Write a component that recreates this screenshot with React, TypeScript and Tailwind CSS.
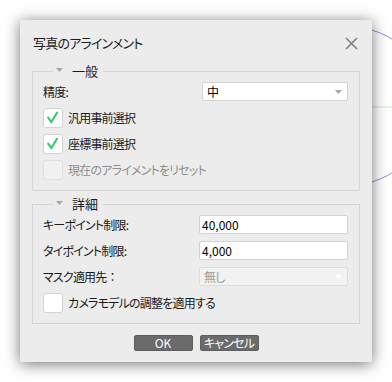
import React from 'react';

const jp = "font-['Noto_Sans_CJK_JP','Noto_Sans',sans-serif] [font-feature-settings:'palt'] tracking-[-0.8px]";

const Caret = ({ color }: { color: string }) => (
  <svg width="7" height="4" viewBox="0 0 7 4">
    <polygon points="0,0 7,0 3.5,4" fill={color} />
  </svg>
);

const Legend = ({ text }: { text: string }) => (
  <legend className="ml-[10px] pl-[3px] pr-[5px]">
    <span className="flex items-center h-4 gap-[9px]">
      <span className="mb-[3px]">
        <Caret color="#a6a6a6" />
      </span>
      <span className="text-[13px] leading-4 tracking-normal text-[#1a1a1a]">{text}</span>
    </span>
  </legend>
);

const Check = ({ checked, disabled, label }: { checked?: boolean; disabled?: boolean; label: string }) => (
  <div className="flex items-center h-5 gap-[5px]">
    <div
      className={`w-5 h-5 rounded-[3px] border ${
        disabled ? 'bg-[#f1f1f1] border-[#dedede]' : 'bg-white border-[#d2d2d2]'
      }`}
    >
      {checked && (
        <svg width="18" height="18" viewBox="0 0 18 18">
          <path d="M4.2 8.6 L7.4 13 L13 3.8" stroke="#3acb6a" strokeWidth="2.2" fill="none" strokeLinecap="round" strokeLinejoin="round" />
        </svg>
      )}
    </div>
    <span className={`text-[12px] leading-4 ${disabled ? 'text-[#8e8e8e]' : 'text-[#1a1a1a]'}`}>{label}</span>
  </div>
);

const Field = ({ label, children }: { label: React.ReactNode; children: React.ReactNode }) => (
  <div className="flex items-center justify-between">
    <span className="text-[12px] leading-4 text-[#1a1a1a]">{label}</span>
    {children}
  </div>
);

const TextBox = ({ value }: { value: string }) => (
  <div className="w-[149px] h-[19px] bg-white border border-[#d3d3d3] rounded-[2px] pl-[2px] flex items-center text-[12px] tracking-normal text-black">
    {value}
  </div>
);

const Select = ({ value, width, disabled }: { value: string; width: string; disabled?: boolean }) => (
  <div
    className={`${width} h-[19px] border rounded-[2px] pl-[4px] pr-[5px] flex items-center justify-between text-[12px] ${
      disabled ? 'bg-[#f2f2f2] border-[#dcdcdc] text-[#9a9a9a]' : 'bg-white border-[#d3d3d3] text-black'
    }`}
  >
    <span>{value}</span>
    <Caret color={disabled ? '#ffffff' : '#a8a8a8'} />
  </div>
);

export default function App() {
  return (
    <div className={`relative w-[392px] h-[382px] bg-white overflow-hidden ${jp}`}>
      {/* viewport content peeking out behind the dialog */}
      <svg className="absolute left-0 top-0" width="392" height="382">
        <line x1="300" y1="107" x2="392" y2="107" stroke="#c4eac4" strokeWidth="1" />
        <circle cx="350" cy="106" r="79" fill="none" stroke="#8c8ce0" strokeWidth="1" />
      </svg>

      <div className="relative ml-[20px] mt-[20px] w-[352px] h-[342px] bg-[#ececec] shadow-[0_2px_14px_rgba(0,0,0,0.55)] px-[12px] flex flex-col">
        <div className="flex items-center justify-between pt-[15px] pl-[1px] pr-[2px] mb-[12px]">
          <span className="text-[13px] leading-4 text-[#1a1a1a]">写真のアラインメント</span>
          <svg width="13" height="13" viewBox="0 0 13 13">
            <path d="M1 1 L12 12 M12 1 L1 12" stroke="#808080" strokeWidth="1.6" />
          </svg>
        </div>

        <fieldset className="border border-[#d6d6d6] pl-[10px] pr-[11px] pt-[3px] pb-[10px] flex flex-col">
          <Legend text="一般" />
          <Field label="精度:">
            <Select value="中" width="w-[146px]" />
          </Field>
          <div className="flex flex-col gap-[6px] mt-[7px]">
            <Check checked label="汎用事前選択" />
            <Check checked label="座標事前選択" />
            <Check disabled label="現在のアライメントをリセット" />
          </div>
        </fieldset>

        <fieldset className="mt-[5px] border border-[#d6d6d6] pl-[10px] pr-[11px] pt-[3px] pb-[10px] flex flex-col gap-[7px]">
          <Legend text="詳細" />
          <Field label="キーポイント制限:">
            <TextBox value="40,000" />
          </Field>
          <Field label="タイポイント制限:">
            <TextBox value="4,000" />
          </Field>
          <Field
            label={
              <>
                マスク適用先<span className="[font-feature-settings:normal]">：</span>
              </>
            }
          >
            <Select value="無し" width="w-[149px]" disabled />
          </Field>
          <Check label="カメラモデルの調整を適用する" />
        </fieldset>

        <div className="flex justify-center gap-[7px] mt-[11px]">
          <button className="w-[59px] h-[16px] bg-[#6b6b6b] border border-[#5e5e5e] rounded-[2px] text-white text-[12px] leading-[14px] tracking-normal">
            OK
          </button>
          <button className="w-[59px] h-[16px] bg-[#6b6b6b] border border-[#5e5e5e] rounded-[2px] text-white text-[12px] leading-[14px]">
            キャンセル
          </button>
        </div>
      </div>
    </div>
  );
}
